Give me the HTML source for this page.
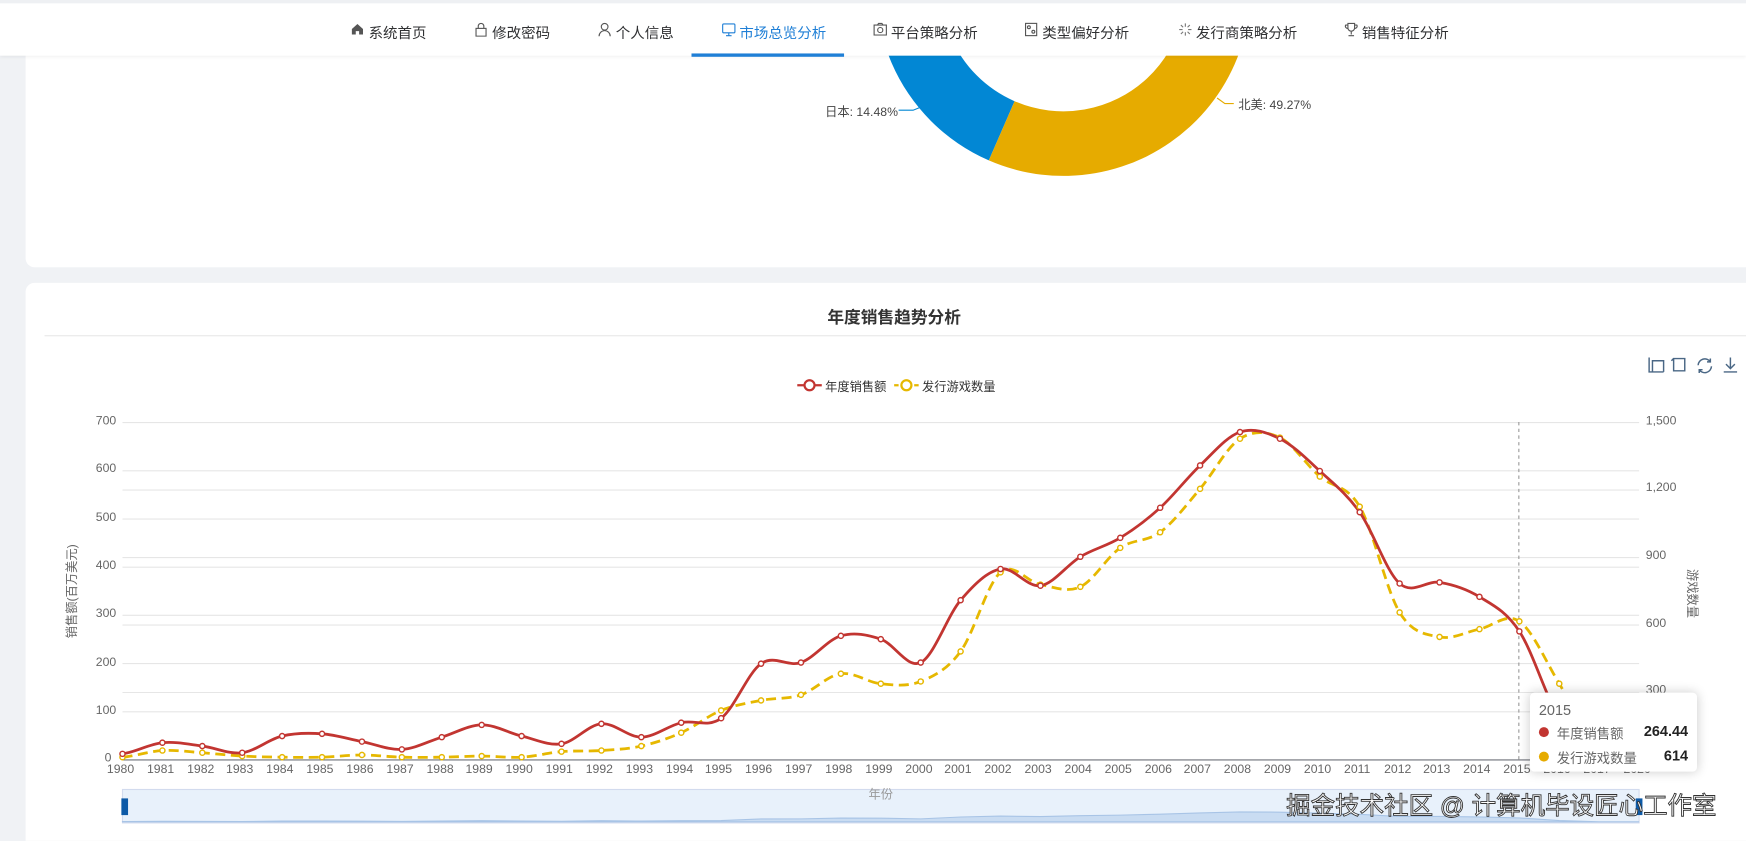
<!DOCTYPE html>
<html><head><meta charset="utf-8"><style>
*{margin:0;padding:0;box-sizing:border-box}
body{width:1746px;height:840px;overflow:hidden;background:#f0f2f5;font-family:"Liberation Sans","Noto Sans CJK SC",sans-serif;color:#333}
#root{position:absolute;left:0;top:0;width:1568px;height:755px;transform:scale(1.11352);transform-origin:0 0;overflow:hidden}
.hdr{position:absolute;left:0;top:0;width:1568px;height:50px;background:#fff;border-top:3px solid #eef0f3;box-shadow:0 1px 3px rgba(0,0,0,.06);z-index:5}
.nav{position:absolute;top:16px;font-size:13px;color:#303133;white-space:nowrap}
.nav svg{position:absolute;left:-16px;top:1px}
.act{color:#1f7fd6}
.ul{position:absolute;left:621px;top:45px;width:137px;height:3px;background:#1f7fd6}
.card{position:absolute;background:#fff;border-radius:8px}
.t{position:absolute;font-size:11px;color:#666;white-space:nowrap}
</style></head><body><div id="root">
<div class="hdr">
 <div class="nav" style="left:331px"><svg width="12" height="12" viewBox="0 0 12 12"><path d="M1 6L6 1.5 11 6V11H7.5V8h-3v3H1z" fill="#555"/></svg>系统首页</div>
 <div class="nav" style="left:442px"><svg width="12" height="13" viewBox="0 0 12 13"><rect x="1.5" y="5.5" width="9" height="7" fill="none" stroke="#555"/><path d="M3.5 5.5V3.5a2.5 2.5 0 015 0v2" fill="none" stroke="#555"/></svg>修改密码</div>
 <div class="nav" style="left:553px"><svg width="12" height="13" viewBox="0 0 12 13"><circle cx="6" cy="4" r="3" fill="none" stroke="#555"/><path d="M1 12.5a5 5 0 0110 0" fill="none" stroke="#555"/></svg>个人信息</div>
 <div class="nav act" style="left:664px"><svg width="13" height="13" viewBox="0 0 13 13"><rect x="1" y="1.5" width="11" height="8" rx="1" fill="none" stroke="#1f7fd6"/><path d="M4 12h5M6.5 9.5V12" stroke="#1f7fd6"/></svg>市场总览分析</div>
 <div class="nav" style="left:800px"><svg width="13" height="12" viewBox="0 0 13 12"><rect x="1" y="2.5" width="11" height="9" fill="none" stroke="#555"/><circle cx="6.5" cy="7" r="2.3" fill="none" stroke="#555"/><path d="M4 2.5l1-1.5h3l1 1.5" fill="none" stroke="#555"/></svg>平台策略分析</div>
 <div class="nav" style="left:936px"><svg width="12" height="13" viewBox="0 0 12 13"><rect x="1" y="1" width="10" height="11" fill="none" stroke="#555"/><circle cx="4" cy="4.5" r="1.3" fill="none" stroke="#555"/><circle cx="8" cy="8.5" r="1.3" fill="none" stroke="#555"/></svg>类型偏好分析</div>
 <div class="nav" style="left:1074px"><svg width="13" height="13" viewBox="0 0 13 13"><path d="M6.5 1v3M6.5 9v3M1 6.5h3M9 6.5h3M2.5 2.5l2 2M8.5 8.5l2 2M2.5 10.5l2-2M8.5 4.5l2-2" stroke="#777"/></svg>发行商策略分析</div>
 <div class="nav" style="left:1223px"><svg width="13" height="13" viewBox="0 0 13 13"><path d="M3.5 1h6v4a3 3 0 01-6 0zM3.5 2.5H1.5a2 2 0 002 3M9.5 2.5h2a2 2 0 01-2 3M6.5 8v3M4 12h5" fill="none" stroke="#555"/></svg>销售特征分析</div>
 <div class="ul"></div>
</div>

<div class="card" style="left:23px;top:20px;width:1560px;height:220px;overflow:hidden">
 <svg width="1560" height="220" style="position:absolute;left:-23px;top:-20px">
  <path id="blue" fill="#0287d4"/><path id="yel" fill="#e6ab00"/>
  <path d="M807 99H820L830 95" fill="none" stroke="#0287d4"/>
  <path d="M1093 88L1100 93H1108" fill="none" stroke="#e6ab00"/>
 </svg>
 <div class="t" style="left:718px;top:72px;color:#444">日本: 14.48%</div>
 <div class="t" style="left:1089px;top:66px;color:#444">北美: 49.27%</div>
</div>

<div class="card" style="left:23px;top:254px;width:1560px;height:520px">
 <div style="position:absolute;left:0;width:1560px;top:20px;text-align:center;font-size:15px;font-weight:bold;color:#333">年度销售趋势分析</div>
 <div style="position:absolute;left:17px;top:47px;width:1543px;height:1px;background:#e8e8e8"></div>
</div>

<svg width="1568" height="755" style="position:absolute;left:0;top:0">
 <g stroke="#e6e6e6" stroke-width="1" id="grid"></g>
 <line x1="110" y1="682.5" x2="1472" y2="682.5" stroke="#6e7079"/>
 <line x1="1364" y1="379" x2="1364" y2="682" stroke="#999" stroke-dasharray="3,3"/>
 <path id="pg" fill="none" stroke="#e6b800" stroke-width="2.5" stroke-dasharray="9,5"/>
 <path id="ps" fill="none" stroke="#c23531" stroke-width="2.5"/>
 <g id="dots"></g>
 <line x1="716" y1="346" x2="738" y2="346" stroke="#c23531" stroke-width="2"/><circle cx="727" cy="346" r="4.5" fill="#fff" stroke="#c23531" stroke-width="2"/>
 <line x1="803" y1="346" x2="825" y2="346" stroke="#e6b800" stroke-width="2" stroke-dasharray="4,2"/><circle cx="814" cy="346" r="4.5" fill="#fff" stroke="#e6b800" stroke-width="2"/>
 <g fill="none" stroke="#4a6785" stroke-width="1.3">
  <path d="M1481 321v13h13M1484 334v-10h10v10"/>
  <path d="M1503 322h10v11h-10zM1503 322l-2 2"/>
  <path d="M1525 328a6 6 0 0111-3M1537 329a6 6 0 01-11 3M1536 322v3h-3M1526 335v-3h3"/>
  <path d="M1554 321v9M1550 327l4 4 4-4M1548 334h12"/>
 </g>
 <rect x="110" y="709" width="1362" height="30" fill="#e8f1fb" stroke="#d2dbee"/>
 <path id="sl" fill="#c9dcf2" stroke="#a8c4e6"/>
 <rect x="109" y="717" width="6" height="15" fill="#0d5aa7"/>
 <rect x="1469" y="717" width="6" height="15" fill="#0d5aa7"/>
</svg>

<div class="t" style="left:741px;top:339px;color:#333">年度销售额</div>
<div class="t" style="left:828px;top:339px;color:#333">发行游戏数量</div>
<div class="t" style="left:780px;top:705px;color:#999">年份</div>
<div class="t" style="left:22px;top:523px;transform:rotate(-90deg);color:#666">销售额(百万美元)</div>
<div class="t" style="left:1498px;top:525px;transform:rotate(90deg);color:#666">游戏数量</div>

<div class="t" style="left:86px;top:372px">700</div><div class="t" style="left:86px;top:415px">600</div><div class="t" style="left:86px;top:459px">500</div><div class="t" style="left:86px;top:502px">400</div><div class="t" style="left:86px;top:545px">300</div><div class="t" style="left:86px;top:589px">200</div><div class="t" style="left:86px;top:632px">100</div><div class="t" style="left:94px;top:675px">0</div>
<div class="t" style="left:1478px;top:372px">1,500</div><div class="t" style="left:1478px;top:432px">1,200</div><div class="t" style="left:1478px;top:493px">900</div><div class="t" style="left:1478px;top:554px">600</div><div class="t" style="left:1478px;top:614px">300</div><div class="t" style="left:1478px;top:675px">0</div>
<div class="t" style="top:685px;left:96px">1980</div><div class="t" style="top:685px;left:132px">1981</div><div class="t" style="top:685px;left:168px">1982</div><div class="t" style="top:685px;left:203px">1983</div><div class="t" style="top:685px;left:239px">1984</div><div class="t" style="top:685px;left:275px">1985</div><div class="t" style="top:685px;left:311px">1986</div><div class="t" style="top:685px;left:347px">1987</div><div class="t" style="top:685px;left:383px">1988</div><div class="t" style="top:685px;left:418px">1989</div><div class="t" style="top:685px;left:454px">1990</div><div class="t" style="top:685px;left:490px">1991</div><div class="t" style="top:685px;left:526px">1992</div><div class="t" style="top:685px;left:562px">1993</div><div class="t" style="top:685px;left:598px">1994</div><div class="t" style="top:685px;left:633px">1995</div><div class="t" style="top:685px;left:669px">1996</div><div class="t" style="top:685px;left:705px">1997</div><div class="t" style="top:685px;left:741px">1998</div><div class="t" style="top:685px;left:777px">1999</div><div class="t" style="top:685px;left:813px">2000</div><div class="t" style="top:685px;left:848px">2001</div><div class="t" style="top:685px;left:884px">2002</div><div class="t" style="top:685px;left:920px">2003</div><div class="t" style="top:685px;left:956px">2004</div><div class="t" style="top:685px;left:992px">2005</div><div class="t" style="top:685px;left:1028px">2006</div><div class="t" style="top:685px;left:1063px">2007</div><div class="t" style="top:685px;left:1099px">2008</div><div class="t" style="top:685px;left:1135px">2009</div><div class="t" style="top:685px;left:1171px">2010</div><div class="t" style="top:685px;left:1207px">2011</div><div class="t" style="top:685px;left:1243px">2012</div><div class="t" style="top:685px;left:1278px">2013</div><div class="t" style="top:685px;left:1314px">2014</div><div class="t" style="top:685px;left:1350px">2015</div><div class="t" style="top:685px;left:1386px">2016</div><div class="t" style="top:685px;left:1422px">2017</div><div class="t" style="top:685px;left:1458px">2020</div>

<div style="position:absolute;left:1374px;top:622px;width:150px;height:71px;background:#fff;border-radius:4px;box-shadow:0 0 10px rgba(0,0,0,.2);font-size:12px;color:#666">
 <div style="position:absolute;left:8px;top:8px;font-size:13px">2015</div>
 <div style="position:absolute;left:8px;top:31px;width:9px;height:9px;border-radius:50%;background:#c23531"></div>
 <div style="position:absolute;left:24px;top:28px">年度销售额</div>
 <div style="position:absolute;right:8px;top:27px;font-weight:bold;color:#222;font-size:13px">264.44</div>
 <div style="position:absolute;left:8px;top:53px;width:9px;height:9px;border-radius:50%;background:#e6ab00"></div>
 <div style="position:absolute;left:24px;top:50px">发行游戏数量</div>
 <div style="position:absolute;right:8px;top:49px;font-weight:bold;color:#222;font-size:13px">614</div>
</div>
<div style="position:absolute;left:1155px;top:706px;font-size:22px;color:#fff;-webkit-text-stroke:0.8px #333;white-space:nowrap">掘金技术社区 @ 计算机毕设匠心工作室</div>
</div>

<script>
var S=[677,667,670,676,661,659,666,673,662,651,661,668,650,662,649,645,596,595,571,574,595,539,511,526,500,483,456,418,388,394,423,460,524,523,536,567,645,682,682];
var G=[680,674,676,679,680,680,678,680,680,679,680,675,674,670,658,638,629,624,605,614,612,585,514,525,527,492,478,439,394,393,428,455,550,572,565,558,614,676,682];
function X(i){return 110+i*35.842}
function path(a){var d="M"+X(0)+" "+a[0];for(var i=0;i<a.length-1;i++){var p0=a[Math.max(i-1,0)],p1=a[i],p2=a[i+1],p3=a[Math.min(i+2,a.length-1)];var t=6;d+="C"+(X(i)+35.842/3)+" "+(p1+(p2-p0)/t)+" "+(X(i+1)-35.842/3)+" "+(p2-(p3-p1)/t)+" "+X(i+1)+" "+p2}return d}
document.getElementById("ps").setAttribute("d",path(S));
document.getElementById("pg").setAttribute("d",path(G));
var ns="http://www.w3.org/2000/svg",dots=document.getElementById("dots"),grid=document.getElementById("grid");
function c(x,y,col){var e=document.createElementNS(ns,"circle");e.setAttribute("cx",x);e.setAttribute("cy",y);e.setAttribute("r",2.3);e.setAttribute("fill","#fff");e.setAttribute("stroke",col);e.setAttribute("stroke-width",1.3);dots.appendChild(e)}
for(var i=0;i<S.length;i++){c(X(i),G[i],"#e6b800");c(X(i),S[i],"#c23531")}
var ys=[379,422.3,465.6,508.9,552.1,595.4,638.7,439.6,500.2,560.8,621.4];
ys.forEach(function(y){var l=document.createElementNS(ns,"line");l.setAttribute("x1",110);l.setAttribute("x2",1472);l.setAttribute("y1",y+.5);l.setAttribute("y2",y+.5);grid.appendChild(l)});
var sl="M110 738";for(var i=0;i<S.length;i++){sl+="L"+X(i)+" "+(738-(682-S[i])/300*9)}sl+="L1472 738Z";document.getElementById("sl").setAttribute("d",sl);
function arc(a0,a1,cx,cy,R,r){function p(a,rr){return (cx+rr*Math.cos(a*Math.PI/180))+" "+(cy+rr*Math.sin(a*Math.PI/180))}var lg=(a1-a0)>180?1:0;return "M"+p(a0,R)+"A"+R+" "+R+" 0 "+lg+" 1 "+p(a1,R)+"L"+p(a1,r)+"A"+r+" "+r+" 0 "+lg+" 0 "+p(a0,r)+"Z"}
document.getElementById("blue").setAttribute("d",arc(113.5,200,955,-10,168,110));
document.getElementById("yel").setAttribute("d",arc(-20,113.5,955,-10,168,110));
</script>
</body></html>
